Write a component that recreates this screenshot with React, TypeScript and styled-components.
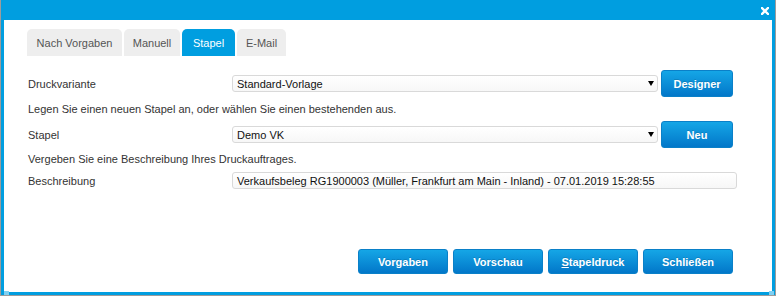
import React from "react";
import styled, { createGlobalStyle } from "styled-components";

const GlobalStyle = createGlobalStyle`
  body {
    margin: 0;
    font-family: "Liberation Sans", Arial, sans-serif;
    background: #ffffff;
  }
`;

const SFrame = styled.div`
  position: relative;
  width: 776px;
  height: 296px;
  box-sizing: border-box;
  display: flex;
  flex-direction: column;
  padding: 0 3px 3px;
  background: #009ee0;
  border: 1px solid #9c9c9c;
  border-top: none;
`;

const STitleBar = styled.div`
  height: 20px;
  display: flex;
  justify-content: flex-end;
  align-items: center;
  padding: 2px 3px 0 0;
  box-sizing: border-box;
`;

const SClose = styled.svg`
  display: block;
  cursor: pointer;
`;

const SGrip = styled.div<{ $side: "left" | "right" }>`
  position: absolute;
  bottom: 0;
  ${({ $side }) => ($side === "left" ? "left: 3px;" : "right: 1px;")}
  width: 5px;
  height: 4px;
  background: #7fd0f2;
`;

const SBody = styled.div`
  flex: 1;
  display: flex;
  flex-direction: column;
  background: #ffffff;
  padding: 9px 39px 18px 23px;
  font-size: 11px;
  color: #333333;
`;

const STabs = styled.div`
  display: flex;
  gap: 2px;
`;

const STab = styled.div<{ $active?: boolean; $w: number }>`
  width: ${({ $w }) => $w}px;
  height: 27px;
  display: flex;
  align-items: center;
  justify-content: center;
  border-radius: 5px 5px 0 0;
  background: ${({ $active }) => ($active ? "#009ee0" : "#eeeeee")};
  color: ${({ $active }) => ($active ? "#ffffff" : "#555555")};
  font-size: 11px;
  cursor: pointer;
`;

const SRow = styled.div<{ $top: number; $h: number }>`
  display: flex;
  align-items: center;
  gap: 3px;
  height: ${({ $h }) => $h}px;
  margin-top: ${({ $top }) => $top}px;
  padding-left: 1px;
`;

const SLabel = styled.div`
  width: 201px;
  flex: none;
`;

const SInfo = styled.div<{ $top: number }>`
  margin-top: ${({ $top }) => $top}px;
  padding-left: 1px;
  line-height: 14px;
`;

const SField = styled.div<{ $wide?: boolean }>`
  flex: 1;
  height: 17px;
  box-sizing: border-box;
  display: flex;
  align-items: center;
  justify-content: space-between;
  padding: 0 3px 0 4px;
  margin-right: ${({ $wide }) => ($wide ? "-4px" : "0")};
  border: 1px solid #d9d9d9;
  border-radius: 3px;
  background: linear-gradient(#ffffff, #f7f7f7);
  color: #111111;
  white-space: nowrap;
`;

const SArrow = styled.span`
  width: 0;
  height: 0;
  border-left: 3px solid transparent;
  border-right: 3px solid transparent;
  border-top: 5px solid #000000;
`;

const SButton = styled.button<{ $w: number; $h: number }>`
  width: ${({ $w }) => $w}px;
  height: ${({ $h }) => $h}px;
  flex: none;
  padding: 0;
  border: 1px solid #0a80c8;
  border-radius: 3px;
  background: linear-gradient(#15a6e6, #0277c9);
  color: #ffffff;
  font-family: "Liberation Sans", Arial, sans-serif;
  font-size: 11px;
  font-weight: bold;
  text-shadow: 0 -1px 0 rgba(0, 0, 0, 0.15);
  cursor: pointer;

  u {
    text-decoration: underline;
  }
`;

const SFooter = styled.div`
  margin-top: auto;
  display: flex;
  justify-content: flex-end;
  gap: 5px;
`;

const tabs = [
  { label: "Nach Vorgaben", w: 95 },
  { label: "Manuell", w: 56 },
  { label: "Stapel", w: 53, active: true },
  { label: "E-Mail", w: 49 },
];

export default function App() {
  return (
    <>
      <GlobalStyle />
      <SFrame>
        <STitleBar>
          <SClose width="8" height="8" viewBox="0 0 8 8">
            <path
              d="M1 1 L7 7 M7 1 L1 7"
              stroke="#ffffff"
              strokeWidth="2.4"
              strokeLinecap="square"
            />
          </SClose>
        </STitleBar>
        <SBody>
          <STabs>
            {tabs.map((t) => (
              <STab key={t.label} $w={t.w} $active={t.active}>
                {t.label}
              </STab>
            ))}
          </STabs>

          <SRow $top={14} $h={27}>
            <SLabel>Druckvariante</SLabel>
            <SField>
              Standard-Vorlage
              <SArrow />
            </SField>
            <SButton $w={72} $h={27}>Designer</SButton>
          </SRow>
          <SInfo $top={5}>
            Legen Sie einen neuen Stapel an, oder wählen Sie einen bestehenden aus.
          </SInfo>
          <SRow $top={5} $h={27}>
            <SLabel>Stapel</SLabel>
            <SField>
              Demo VK
              <SArrow />
            </SField>
            <SButton $w={72} $h={27}>Neu</SButton>
          </SRow>
          <SInfo $top={4}>Vergeben Sie eine Beschreibung Ihres Druckauftrages.</SInfo>
          <SRow $top={5} $h={19}>
            <SLabel>Beschreibung</SLabel>
            <SField $wide>
              Verkaufsbeleg RG1900003 (Müller, Frankfurt am Main - Inland) - 07.01.2019 15:28:55
            </SField>
          </SRow>

          <SFooter>
            <SButton $w={90} $h={25}>Vorgaben</SButton>
            <SButton $w={90} $h={25}>Vorschau</SButton>
            <SButton $w={90} $h={25}>
              <u>S</u>tapeldruck
            </SButton>
            <SButton $w={90} $h={25}>Schließen</SButton>
          </SFooter>
        </SBody>
        <SGrip $side="left" />
        <SGrip $side="right" />
      </SFrame>
    </>
  );
}
